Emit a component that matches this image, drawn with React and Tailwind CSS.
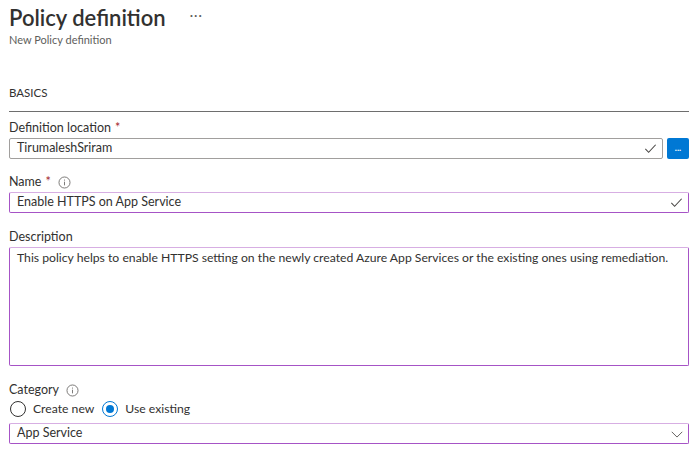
import React from "react";

const font = { fontFamily: 'Lato, "Open Sans", sans-serif' };

const Check = () => (
  <svg width="15" height="15" viewBox="0 0 16 16" fill="none" className="shrink-0">
    <path d="M2.5 8.5l3.5 3.5 7.5-8" stroke="#484644" strokeWidth="1.1" />
  </svg>
);

const Chevron = () => (
  <svg width="14" height="14" viewBox="0 0 16 16" fill="none" className="shrink-0">
    <path d="M2 5.5l6 6 6-6" stroke="#605e5c" strokeWidth="1.1" />
  </svg>
);

const Info = () => (
  <svg width="13" height="13" viewBox="0 0 16 16" fill="none" className="shrink-0">
    <circle cx="8" cy="8" r="6.8" stroke="#605e5c" strokeWidth="1" />
    <path d="M8 7v4.5" stroke="#605e5c" strokeWidth="1" />
    <circle cx="8" cy="4.9" r="0.7" fill="#605e5c" />
  </svg>
);

const Star = () => <span className="text-[#a4262c] ml-1">*</span>;

export default function App() {
  return (
    <div className="w-[700px] h-[450px] bg-white text-[#323130] px-[9px] overflow-hidden" style={font}>
      {/* header */}
      <div className="flex items-center gap-[24px] pt-[3px] h-[32px]">
        <h1 className="text-[22px] font-semibold leading-[30px] text-[#323130]">Policy definition</h1>
        <span className="text-[#605e5c] text-[13px] tracking-[1px] mb-[4px]">···</span>
      </div>
      <div className="text-[11px] text-[#605e5c] leading-[14px] mt-[1px]">New Policy definition</div>

      {/* basics */}
      <div className="text-[11.5px] leading-[14px] mt-[39px]">BASICS</div>
      <div className="h-px bg-[#6e6e6e] w-[680px] mt-[11px]" />

      {/* definition location */}
      <div className="text-[12.5px] leading-[16px] mt-[8px] flex">
        Definition location
        <Star />
      </div>
      <div className="flex items-center gap-[4px] mt-[2px]">
        <div className="flex items-center h-[21px] w-[654px] border border-[#a19f9d] rounded-[2px] pl-[7px] pr-[4px]">
          <span className="flex-1 text-[12.5px]">TirumaleshSriram</span>
          <Check />
        </div>
        <button className="w-[22px] h-[21px] bg-[#0078d4] rounded-[2px] text-white text-[9px] leading-none font-bold pb-[2px]">
          ...
        </button>
      </div>

      {/* name */}
      <div className="text-[12.5px] leading-[16px] mt-[15px] flex items-center">
        Name
        <Star />
        <span className="ml-[7px]">
          <Info />
        </span>
      </div>
      <div className="flex items-center h-[21px] w-[680px] border border-[#a653c6] border-t-[#d7aee3] rounded-[2px] pl-[7px] pr-[4px] mt-[2px]">
        <span className="flex-1 text-[12.5px]">Enable HTTPS on App Service</span>
        <Check />
      </div>

      {/* description */}
      <div className="text-[12.5px] leading-[16px] mt-[16px]">Description</div>
      <div className="h-[119px] w-[680px] border border-[#a653c6] border-t-[#d7aee3] rounded-[2px] pl-[7px] pt-[1px] mt-[2px] text-[12.2px] leading-[18px]">
        This policy helps to enable HTTPS setting on the newly created Azure App Services or the existing ones using remediation.
      </div>

      {/* category */}
      <div className="text-[12.5px] leading-[16px] mt-[16px] flex items-center">
        Category
        <span className="ml-[7px]">
          <Info />
        </span>
      </div>
      <div className="flex items-center mt-[2px] h-[18px] text-[12.2px]">
        <span className="w-[16px] h-[16px] rounded-full border border-[#323130] ml-px" />
        <span className="ml-[7px]">Create new</span>
        <span className="w-[16px] h-[16px] rounded-full border border-[#0078d4] ml-[8px] flex items-center justify-center">
          <span className="w-[8px] h-[8px] rounded-full bg-[#0078d4]" />
        </span>
        <span className="ml-[7px]">Use existing</span>
      </div>
      <div className="flex items-center h-[21px] w-[680px] border border-[#a653c6] border-t-[#d7aee3] rounded-[2px] pl-[7px] pr-[4px] mt-[5px]">
        <span className="flex-1 text-[12.5px]">App Service</span>
        <Chevron />
      </div>
    </div>
  );
}
